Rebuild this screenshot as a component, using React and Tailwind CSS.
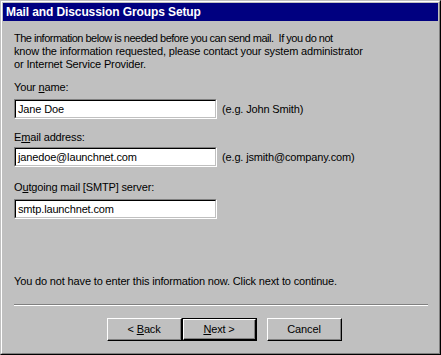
import React from "react";

const field = "h-[20px] w-[203px] border-t border-l border-t-[#808080] border-l-[#808080] border-b border-r border-b-white border-r-white";
const fieldInner = "h-full w-full border-t border-l border-t-black border-l-black border-b border-r border-b-[#c0c0c0] border-r-[#c0c0c0] bg-white pl-[2px] flex items-center";

function Field({ value }) {
    return (
        <div className={field}>
            <div className={fieldInner}>{value}</div>
        </div>
    );
}

function Button({ children, isDefault }) {
    const face = (
        <div className="h-full w-full border-t border-l border-t-white border-l-white border-b border-r border-b-black border-r-black">
            <div className="h-full w-full border-b border-r border-b-[#808080] border-r-[#808080] flex items-center justify-center">
                {children}
            </div>
        </div>
    );
    if (isDefault) {
        return <div className="h-[23px] w-[75px] border border-black">{face}</div>;
    }
    return <div className="h-[23px] w-[75px]">{face}</div>;
}

export default function App() {
    return (
        <div
            className="w-[441px] h-[355px] bg-[#c0c0c0] border border-t-[#c0c0c0] border-l-[#c0c0c0] border-r-black border-b-black text-[11px] tracking-[-0.15px] text-black"
            style={{ fontFamily: '"Liberation Sans", Arial, sans-serif' }}
        >
            <div className="h-full w-full border border-t-white border-l-white border-r-[#808080] border-b-[#808080] p-px flex flex-col">
                <div className="h-[18px] bg-[#000080] text-white font-bold text-[12px] tracking-[-0.1px] pl-[3px] flex items-center">
                    Mail and Discussion Groups Setup
                </div>
                <div className="flex flex-col pl-[11px] leading-[13px]">
                    <p className="mt-[11px]">
                        <span className="tracking-[-0.5px]">
                            The information below is needed before you can send mail.&nbsp; If you do not
                        </span>
                        <br />
                        know the information requested, please contact your system administrator
                        <br />
                        or Internet Service Provider.
                    </p>

                    <div className="mt-[10px]">
                        Your <u>n</u>ame:
                    </div>
                    <div className="mt-[5px] flex items-center">
                        <Field value="Jane Doe" />
                        <span className="ml-[5px]">(e.g. John Smith)</span>
                    </div>

                    <div className="mt-[12px]">
                        E<u>m</u>ail address:
                    </div>
                    <div className="mt-[3px] flex items-center">
                        <Field value="janedoe@launchnet.com" />
                        <span className="ml-[5px]">(e.g. jsmith@company.com)</span>
                    </div>

                    <div className="mt-[14px]">
                        O<u>u</u>tgoing mail [SMTP] server:
                    </div>
                    <div className="mt-[5px] flex items-center">
                        <Field value="smtp.launchnet.com" />
                    </div>

                    <div className="mt-[56px]">
                        You do not have to enter this information now. Click next to continue.
                    </div>

                    <div className="mt-[16px] w-[414px] border-t border-t-[#808080] border-b border-b-white" />

                    <div className="mt-[12px] ml-[93px] flex">
                        <Button>
                            &lt; <u className="ml-[3px]">B</u>ack
                        </Button>
                        <Button isDefault>
                            <u>N</u>ext &gt;
                        </Button>
                        <div className="ml-[10px]">
                            <Button>Cancel</Button>
                        </div>
                    </div>
                </div>
            </div>
        </div>
    );
}
